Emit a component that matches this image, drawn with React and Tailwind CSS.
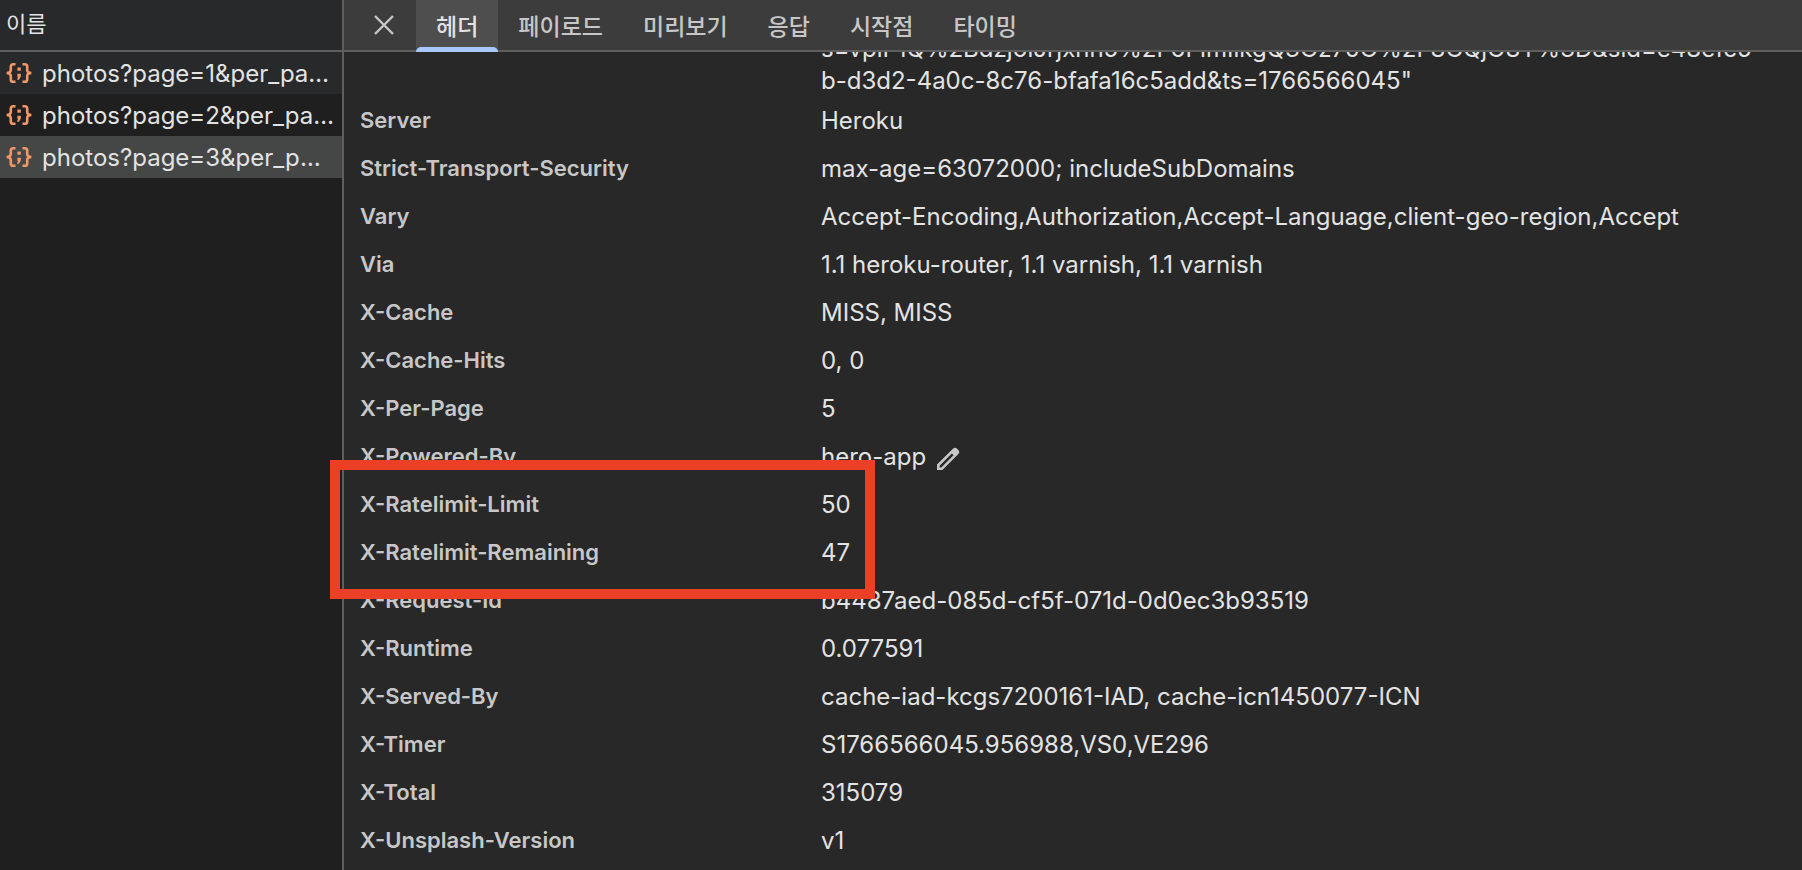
const requests = [
  { name: 'photos?page=1&per_page=5', row: 'bg-[#28292a]', link: 'pr-2' },
  { name: 'photos?page=2&per_page=5', row: 'bg-[#1f1f1f]', link: 'pr-2' },
  { name: 'photos?page=3&per_page=5', row: 'bg-[#454746]', link: 'pr-4' },
];

const tabs = ['헤더', '페이로드', '미리보기', '응답', '시작점', '타이밍'];

const headers = [
  { name: '', value: 's=vpiF1Q%2Bdzj6iJrjxnn5%2F6FImIlkgQ3Oz70O%2F8CQjO8Y%3D&sid=e48efc5\nb-d3d2-4a0c-8c76-bfafa16c5add&ts=1766566045"' },
  { name: 'Server', value: 'Heroku' },
  { name: 'Strict-Transport-Security', value: 'max-age=63072000; includeSubDomains' },
  { name: 'Vary', value: 'Accept-Encoding,Authorization,Accept-Language,client-geo-region,Accept' },
  { name: 'Via', value: '1.1 heroku-router, 1.1 varnish, 1.1 varnish' },
  { name: 'X-Cache', value: 'MISS, MISS' },
  { name: 'X-Cache-Hits', value: '0, 0' },
  { name: 'X-Per-Page', value: '5' },
  { name: 'X-Powered-By', value: 'hero-app', editable: true },
  { name: 'X-Ratelimit-Limit', value: '50' },
  { name: 'X-Ratelimit-Remaining', value: '47' },
  { name: 'X-Request-Id', value: 'b4487aed-085d-cf5f-071d-0d0ec3b93519' },
  { name: 'X-Runtime', value: '0.077591' },
  { name: 'X-Served-By', value: 'cache-iad-kcgs7200161-IAD, cache-icn1450077-ICN' },
  { name: 'X-Timer', value: 'S1766566045.956988,VS0,VE296' },
  { name: 'X-Total', value: '315079' },
  { name: 'X-Unsplash-Version', value: 'v1' },
];

function JsonIcon() {
  return (
    <svg className="h-5 w-[26px] shrink-0" viewBox="0 0 26 20" fill="none" stroke="#f29766" strokeWidth="2.6" aria-hidden="true">
      <path d="M9.5 1.3H7.2Q4.8 1.3 4.8 3.6V7Q4.8 10 0.6 10Q4.8 10 4.8 13V16.4Q4.8 18.7 7.2 18.7H9.5" />
      <path d="M16.5 1.3H18.8Q21.2 1.3 21.2 3.6V7Q21.2 10 25.4 10Q21.2 10 21.2 13V16.4Q21.2 18.7 18.8 18.7H16.5" />
      <path d="M11.4 4.6H14.8V7.8H11.4ZM11.4 10.8H14.8V13.6L13 16.8H11L12 13.8H11.4Z" fill="#f29766" stroke="none" />
    </svg>
  );
}

function PencilIcon() {
  return (
    <svg className="h-6 w-6" viewBox="0 0 24 24" aria-hidden="true">
      <path
        fill="#c7c7c7"
        fillRule="evenodd"
        d="M1 23V17.6L17.2 1.5Q19 0 20.8 1.5L22.6 3.3Q24 5 22.6 6.8L6.4 23ZM3.6 20.5H5.3L17.6 8.2L15.8 6.4L3.6 18.7Z"
      />
    </svg>
  );
}

export default function App() {
  return (
    <div className="relative flex h-screen overflow-hidden bg-[#282828] font-['Inter','Noto_Sans_CJK_KR',sans-serif] text-[#e3e3e3]">
      {/* Request list */}
      <aside className="flex w-[344px] shrink-0 flex-col border-r-2 border-[#5e5e5e] bg-[#1f1f1f]">
        <h2 className="flex h-[52px] items-center border-b-2 border-[#5e5e5e] bg-[#28292a] px-1.5 pb-0.5 text-[22px]">이름</h2>
        <ul>
          {requests.map(({ name, row, link }) => (
            <li key={name} className={row}>
              <a href="#" className={`flex h-[42px] items-center gap-2.5 pl-1.5 ${link}`}>
                <JsonIcon />
                <span className="truncate pt-0.5 text-[24px]">{name}</span>
              </a>
            </li>
          ))}
        </ul>
      </aside>

      {/* Response details */}
      <main className="flex min-w-0 flex-1 flex-col">
        <div className="flex h-[52px] shrink-0 border-b-2 border-[#5e5e5e] bg-[#3c3c3c]">
          <button aria-label="닫기" className="flex w-[72px] items-center justify-center pl-2">
            <svg className="h-5 w-5" viewBox="0 0 20 20" stroke="#c7c7c7" strokeWidth="2.4" aria-hidden="true">
              <path d="M1 1L19 19M19 1L1 19" />
            </svg>
          </button>
          {tabs.map((tab, i) => (
            <button
              key={tab}
              className={`relative px-5 pt-1 text-[23px] font-medium ${i === 0 ? 'bg-[#4e4e4e] text-[#e3e3e3]' : 'text-[#c7c7c7]'}`}
            >
              {tab}
              {i === 0 && <span className="absolute -bottom-0.5 left-0 h-[5px] w-full rounded-t-md bg-[#a8c7fa]" />}
            </button>
          ))}
        </div>

        <div className="flex min-h-0 flex-1 flex-col justify-end overflow-hidden pb-[5px] pl-4">
          <table className="w-full text-left">
            <tbody>
              {headers.map((h) => (
                <tr key={h.name} className="h-12">
                  <th className="w-[461px] p-0 pb-0.5 text-[22px] leading-8 font-semibold text-[#c7c7c7]">{h.name}</th>
                  <td className="p-0 text-[24px] leading-8 whitespace-pre">
                    {h.editable ? (
                      <span className="flex items-center gap-2.5">
                        {h.value}
                        <button aria-label="수정" className="pt-1">
                          <PencilIcon />
                        </button>
                      </span>
                    ) : (
                      h.value
                    )}
                  </td>
                </tr>
              ))}
            </tbody>
          </table>
        </div>
      </main>

      {/* Highlight over the rate limit rows */}
      <div className="pointer-events-none absolute top-[460px] left-[330px] h-[139px] w-[545px] border-10 border-[#eb4026]" />
    </div>
  );
}
